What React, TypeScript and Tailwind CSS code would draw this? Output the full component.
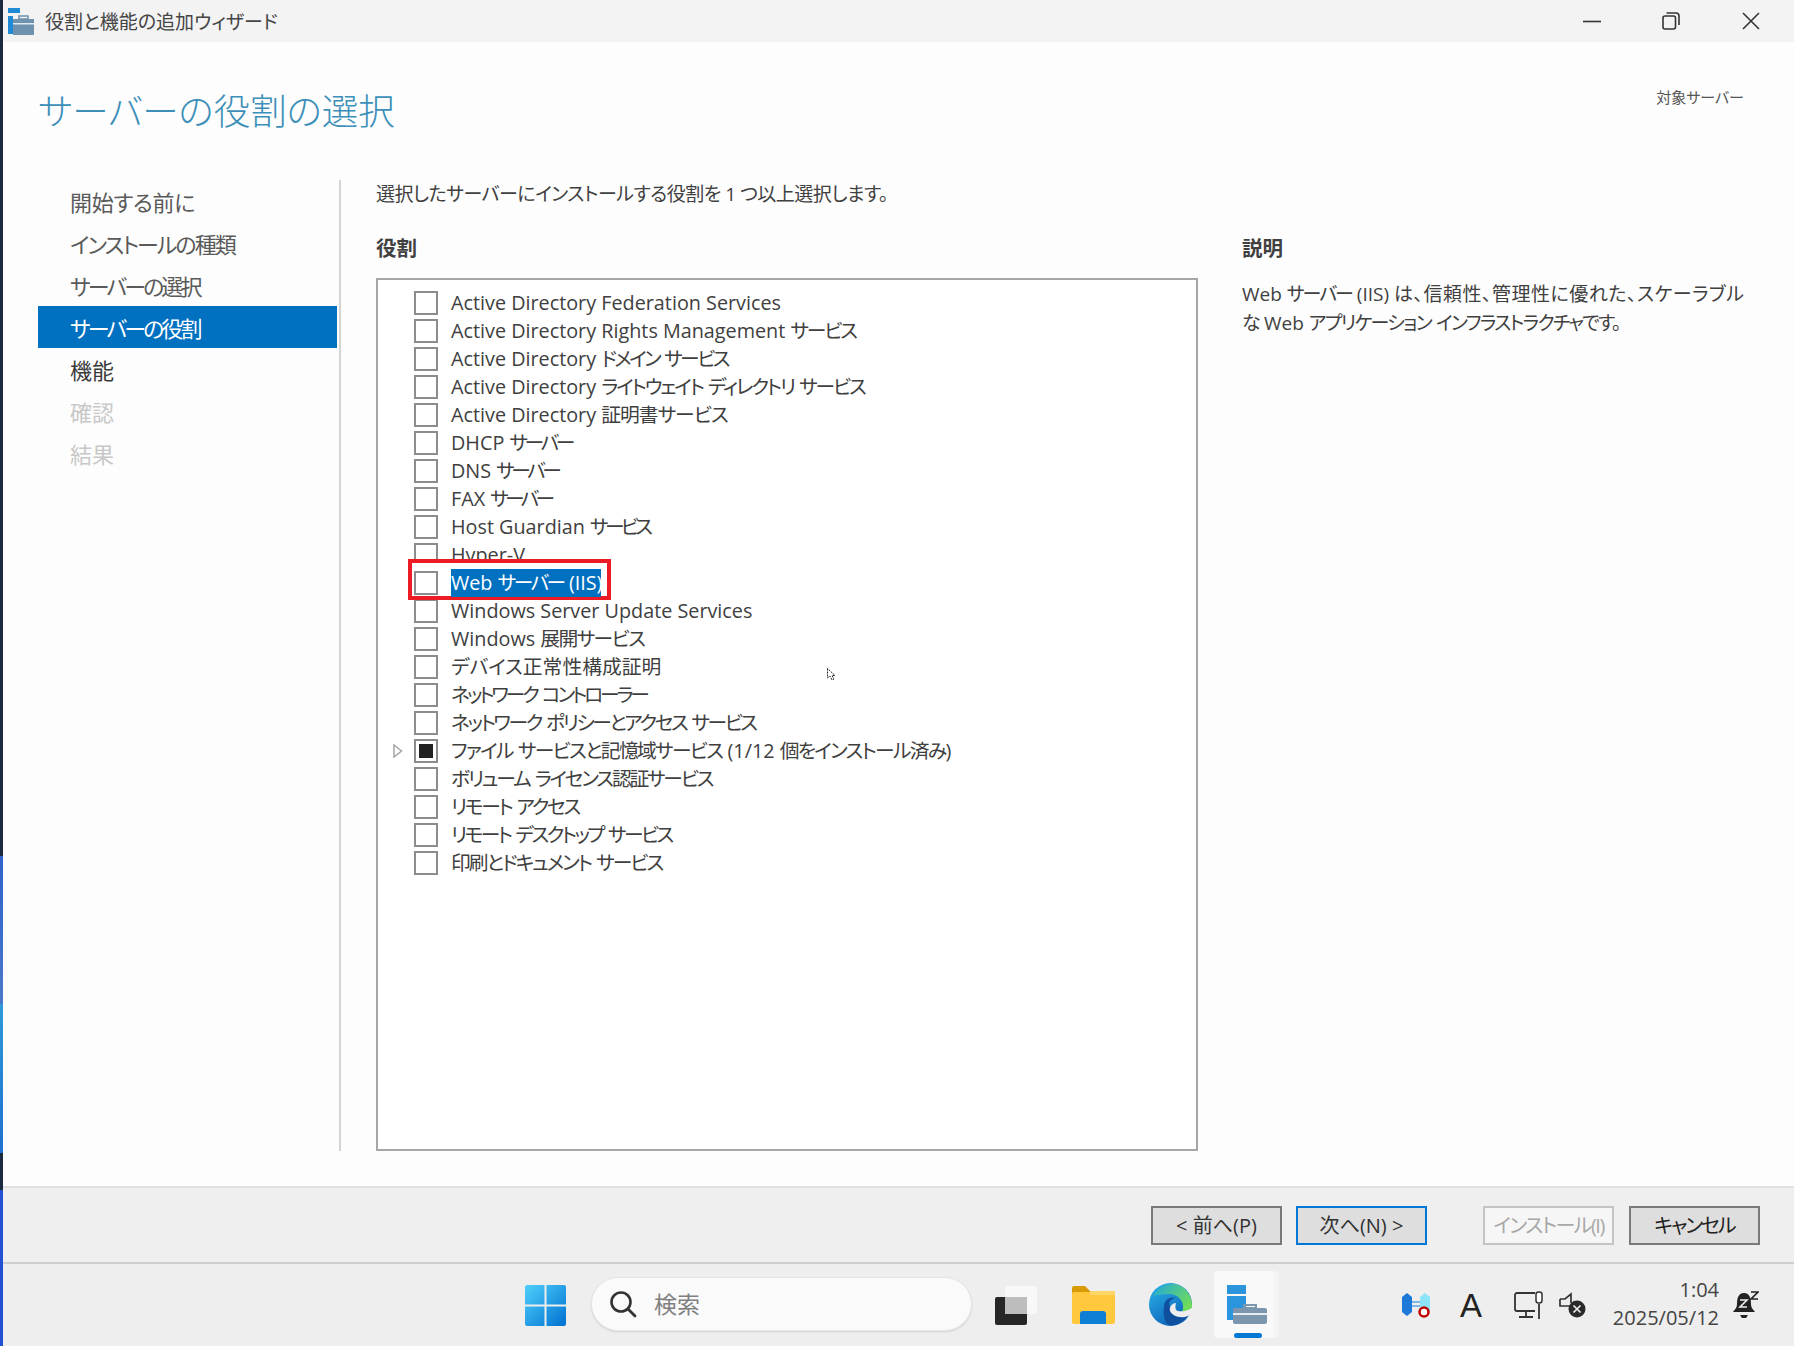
const navItems = [
  { label: "開始する前に", cls: "text-[#5a5a5a] tracking-[-0.3px]" },
  { label: "インストールの種類", cls: "text-[#5a5a5a] tracking-[-2px]" },
  { label: "サーバーの選択", cls: "text-[#5a5a5a] tracking-[-2.9px]" },
  { label: "サーバーの役割", cls: "text-white bg-[#0070c0] tracking-[-2.9px]" },
  { label: "機能", cls: "text-[#3a3a3a]" },
  { label: "確認", cls: "text-[#c8c8c8]" },
  { label: "結果", cls: "text-[#c8c8c8]" },
];

const roles = [
  { text: "Active Directory Federation Services", jp: "" },
  { text: "Active Directory Rights Management サービス", jp: "tracking-[-2.2px]" },
  { text: "Active Directory ドメイン サービス", jp: "tracking-[-2.55px]" },
  { text: "Active Directory ライトウェイト ディレクトリ サービス", jp: "tracking-[-2.15px]" },
  { text: "Active Directory 証明書サービス", jp: "tracking-[-1px]" },
  { text: "DHCP サーバー", jp: "tracking-[-3.4px]" },
  { text: "DNS サーバー", jp: "tracking-[-3.5px]" },
  { text: "FAX サーバー", jp: "tracking-[-3.8px]" },
  { text: "Host Guardian サービス", jp: "tracking-[-3.7px]" },
  { text: "Hyper-V", jp: "" },
  { text: "Web サーバー (IIS)", jp: "tracking-[-2.5px]" },
  { text: "Windows Server Update Services", jp: "" },
  { text: "Windows 展開サービス", jp: "tracking-[-1.6px]" },
  { text: "デバイス正常性構成証明", jp: "" },
  { text: "ネットワーク コントローラー", jp: "tracking-[-3.15px]" },
  { text: "ネットワーク ポリシーとアクセス サービス", jp: "tracking-[-2.45px]" },
  { text: "ファイル サービスと記憶域サービス (1/12 個をインストール済み)", jp: "tracking-[-1.7px]" },
  { text: "ボリューム ライセンス認証サービス", jp: "tracking-[-2.2px]" },
  { text: "リモート アクセス", jp: "tracking-[-2.35px]" },
  { text: "リモート デスクトップ サービス", jp: "tracking-[-2.6px]" },
  { text: "印刷とドキュメント サービス", jp: "tracking-[-2px]" },
];

function Squeezed({ text, cls }: { text: string; cls: string }) {
  return (
    <>
      {text.split(/([^\x00-\x7f]+)/).map((part, i) =>
        i % 2 === 1 ? <span key={i} className={cls}>{part}</span> : <span key={i}>{part}</span>
      )}
    </>
  );
}

function ServerIcon() {
  return (
    <svg width="26" height="27" viewBox="0 0 26 27" className="shrink-0">
      <rect x="0" y="0" width="12" height="5" fill="#1f8ad6" />
      <rect x="0" y="8" width="5" height="18" fill="#1f8ad6" />
      <rect x="5" y="11" width="21" height="16" fill="#6f92ae" />
      <rect x="5" y="15" width="21" height="1.5" fill="#dfe8ee" />
      <rect x="11" y="8" width="9" height="3" fill="none" stroke="#6f92ae" strokeWidth="1.5" />
    </svg>
  );
}

function TaskbarServerIcon() {
  return (
    <svg width="40" height="40" viewBox="0 0 40 40">
      <rect x="0" y="0" width="19" height="9" fill="#2a94dc" />
      <rect x="0" y="11" width="19" height="24" fill="#2a94dc" />
      <rect x="6" y="23" width="34" height="16" rx="2" fill="#7b96ad" />
      <rect x="6" y="28" width="34" height="2" fill="#e6edf2" />
      <rect x="17" y="20" width="12" height="3" fill="none" stroke="#7b96ad" strokeWidth="2" />
    </svg>
  );
}

function Button({ label, cls }: { label: string; cls: string }) {
  return (
    <div className={"w-[131px] h-[39px] pt-[2px] flex items-center justify-center border-2 text-[20px] " + cls}>{label}</div>
  );
}

export default function App() {
  return (
    <div className="relative flex w-[1794px] h-[1346px] overflow-hidden bg-white font-['Open_Sans','Noto_Sans_CJK_JP',sans-serif] [font-feature-settings:'palt'] text-[#404040]">
      <div className="w-[3px] flex flex-col shrink-0">
        <div className="h-[856px] bg-[#1c2a40]" />
        <div className="h-[148px] bg-gradient-to-b from-[#2f62cc] to-[#4a78c8]" />
        <div className="h-[149px] bg-gradient-to-b from-[#2f9ad8] to-[#1f70d0]" />
        <div className="h-[37px] bg-[#1c2a40]" />
        <div className="flex-1 bg-[#2450d4]" />
      </div>

      <div className="flex-1 flex flex-col min-w-0">
        {/* title bar */}
        <div className="h-[42px] bg-[#f3f3f3] flex items-center shrink-0">
          <div className="ml-[5px] mt-[1px]"><ServerIcon /></div>
          <span className="ml-[11px] mt-[2px] text-[19px] text-[#444]">役割と機能の追加ウィザード</span>
          <div className="ml-auto flex items-center">
            <svg width="18" height="18" viewBox="0 0 18 18" className="mr-[61px]">
              <path d="M0 9.5H18" stroke="#333" strokeWidth="1.6" />
            </svg>
            <svg width="18" height="18" viewBox="0 0 18 18" className="mr-[62px]">
              <rect x="1" y="4" width="12.5" height="13" rx="2" fill="none" stroke="#333" strokeWidth="1.6" />
              <path d="M4.5 1H14a3 3 0 0 1 3 3v9" fill="none" stroke="#333" strokeWidth="1.6" />
            </svg>
            <svg width="18" height="18" viewBox="0 0 18 18" className="mr-[34px]">
              <path d="M1 1L17 17M17 1L1 17" stroke="#333" strokeWidth="1.6" />
            </svg>
          </div>
        </div>

        {/* wizard body */}
        <div className="flex-1 flex flex-col bg-[#fdfdfd] min-h-0">
          <div className="h-[138px] flex shrink-0">
            <div className="ml-[35px] mt-[44px] text-[36.5px] leading-[50px] font-light text-[#3c8fb8]">サーバーの役割の選択</div>
            <div className="ml-auto mr-[50px] mt-[45px] text-[15px] leading-[20px] text-[#555]">対象サーバー</div>
          </div>

          <div className="flex-1 flex min-h-0 pb-[35px]">
            <div className="ml-[35px] w-[299px] shrink-0">
              {navItems.map((n) => (
                <div key={n.label} className={"h-[42px] pl-[32px] pt-[3px] flex items-center text-[22px] " + n.cls}>
                  {n.label}
                </div>
              ))}
            </div>
            <div className="ml-[2px] w-[2px] bg-[#d4d4d4] shrink-0" />

            <div className="ml-[35px] w-[822px] shrink-0 flex flex-col">
              <div className="h-[28px] flex items-center text-[19px] tracking-[-0.5px] whitespace-nowrap">
                選択したサーバーにインストールする役割を 1 つ以上選択します。
              </div>
              <div className="h-[70px] pt-[26px] text-[20.5px] leading-[28px] font-bold">役割</div>
              <div className="flex-1 border-2 border-[#a6a6a6] bg-white pt-[9px]">
                {roles.map((r, i) => {
                  const isWeb = i === 10;
                  const isFile = i === 16;
                  return (
                    <div key={r.text} className={"relative h-[28px] pl-[36px] flex items-center text-[19.8px] whitespace-nowrap " + (isWeb ? "z-10" : "")}>
                      {isWeb && (
                        <div className="absolute left-[30px] top-[-10px] w-[203px] h-[41px] border-4 border-[#ed1c24] bg-white" />
                      )}
                      {isFile && (
                        <svg width="10" height="14" viewBox="0 0 10 14" className="absolute left-[15px] top-[7px]">
                          <path d="M1 1L8.5 7L1 13Z" fill="none" stroke="#a6a6a6" strokeWidth="1.5" />
                        </svg>
                      )}
                      <div className="relative w-[24px] h-[24px] border-2 border-[#8c8c8c] bg-white shrink-0 flex items-center justify-center">
                        {isFile && <div className="w-[14px] h-[14px] bg-[#222]" />}
                      </div>
                      <span className={"relative ml-[13px] " + (isWeb ? "bg-[#0070c0] text-white h-[28px] leading-[28px] w-[150px]" : "")}>
                        <Squeezed text={r.text} cls={r.jp} />
                      </span>
                    </div>
                  );
                })}
              </div>
            </div>

            <div className="ml-[44px] flex-1 min-w-0">
              <div className="h-[42px]" />
              <div className="h-[57px] pt-[12px] text-[20.5px] leading-[28px] font-bold">説明</div>
              <div className="text-[19px] leading-[29px] whitespace-nowrap mt-[1px]">
                <Squeezed text="Web サーバー " cls="tracking-[-2px]" />
                (IIS) <span className="tracking-[0.5px]">は、信頼性、管理性に優れた、スケーラブル</span>
                <br />
                <Squeezed text="な Web アプリケーション インフラストラクチャです。" cls="tracking-[-1.65px]" />
              </div>
            </div>
          </div>
        </div>

        {/* footer buttons */}
        <div className="h-[76px] shrink-0 bg-[#efefef] border-t-2 border-[#e0e0e0] flex items-center">
          <div className="ml-[1148px]">
            <Button label="< 前へ(P)" cls="bg-[#dedede] border-[#7a7a7a] text-[#333]" />
          </div>
          <div className="ml-[14px]">
            <Button label="次へ(N) >" cls="bg-[#dedede] border-[#0078d7] text-[#333]" />
          </div>
          <div className="ml-[56px]">
            <Button label="インストール(I)" cls="bg-[#f6f6f6] border-[#c4c4c4] text-[#a8a8a8] tracking-[-1.5px]" />
          </div>
          <div className="ml-[15px]">
            <Button label="キャンセル" cls="bg-[#dedede] border-[#7a7a7a] text-[#222] tracking-[-2px]" />
          </div>
        </div>

        {/* taskbar */}
        <div className="h-[84px] shrink-0 bg-[#eeeeee] border-t-2 border-[#cfcfcf] flex items-center">
          <svg width="41" height="41" viewBox="0 0 41 41" className="ml-[522px] shrink-0">
            <defs>
              <linearGradient id="w" x1="0" y1="0" x2="1" y2="1">
                <stop offset="0" stopColor="#4fd0fb" />
                <stop offset="1" stopColor="#0070d0" />
              </linearGradient>
            </defs>
            <path d="M0 2a2 2 0 0 1 2-2H19.5V19.5H0ZM21.5 0H39a2 2 0 0 1 2 2V19.5H21.5ZM0 21.5H19.5V41H2a2 2 0 0 1-2-2ZM21.5 21.5H41V39a2 2 0 0 1-2 2H21.5Z" fill="url(#w)" />
          </svg>

          <div className="ml-[25px] -mt-[2px] w-[381px] h-[54px] rounded-full bg-[#fafafa] border border-[#e6e6e6] shadow-[0_1px_2px_rgba(0,0,0,0.12)] flex items-center shrink-0">
            <svg width="28" height="28" viewBox="0 0 28 28" className="ml-[17px]">
              <circle cx="12" cy="12" r="9.5" fill="none" stroke="#333" strokeWidth="2.6" />
              <path d="M19 19L26 26" stroke="#333" strokeWidth="2.8" strokeLinecap="round" />
            </svg>
            <span className="ml-[17px] text-[23px] text-[#808080]">検索</span>
          </div>

          <svg width="42" height="39" viewBox="0 0 42 39" className="ml-[23px] shrink-0">
            <rect x="0" y="11" width="32" height="28" rx="2" fill="#262626" />
            <rect x="10" y="0" width="32" height="28" rx="2" fill="#f8f8f8" fillOpacity="0.92" />
            <rect x="10" y="11" width="22" height="17" fill="#bdbdbd" />
          </svg>

          <svg width="43" height="38" viewBox="0 0 43 38" className="ml-[35px] shrink-0">
            <path d="M0 2a2 2 0 0 1 2-2H13L18 5H41a2 2 0 0 1 2 2V10H0Z" fill="#d99a08" />
            <rect x="0" y="6" width="43" height="32" rx="2" fill="#ffc83d" />
            <rect x="18" y="5" width="25" height="4" fill="#ffd768" />
            <path d="M8 38V28a3 3 0 0 1 3-3H31a3 3 0 0 1 3 3V38Z" fill="#0f7fd6" />
          </svg>

          <svg width="43" height="43" viewBox="0 0 43 43" className="ml-[34px] -mt-[2px] shrink-0">
            <defs>
              <linearGradient id="e1" x1="0" y1="0" x2="0.6" y2="1">
                <stop offset="0" stopColor="#2cb5e8" />
                <stop offset="1" stopColor="#0c62b8" />
              </linearGradient>
              <linearGradient id="e2" x1="0" y1="0" x2="1" y2="0.6">
                <stop offset="0" stopColor="#1fa8dc" />
                <stop offset="1" stopColor="#6fdc5a" />
              </linearGradient>
            </defs>
            <circle cx="21.5" cy="21.5" r="21.5" fill="url(#e1)" />
            <path d="M4 13C10 3 20 0 26 1C36 3 43 12 43 23C43 28 38 30 33 29C37 20 30 11 20 11C13 11 8 12 4 13Z" fill="url(#e2)" />
            <path d="M15 24C15 17 21 13 27 15C21 16 19 20 21 24C24 32 32 33 39 32C33 41 24 44 18 41C15 36 14 30 15 24Z" fill="#0f4f9e" />
            <path d="M44 24C39 28 33 29 29 28C26 27 26 24 27 20C23 20 20 24 21 28C23 33 32 36 39 33L44 30Z" fill="#eeeeee" />
          </svg>

          <div className="relative ml-[22px] -mt-[2px] w-[60px] h-[67px] rounded-[4px] bg-[#f9f9f9] shadow-[5px_0_0_#f4f4f4] shrink-0 flex justify-start pl-[13px] pt-[14px]">
            <TaskbarServerIcon />
            <div className="absolute left-[20px] bottom-0 w-[28px] h-[5px] rounded-full bg-[#0078d4]" />
          </div>

          <svg width="30" height="26" viewBox="0 0 30 26" className="ml-[127px] shrink-0">
            <path d="M1 5L6 1L11 5V20L6 24L1 20Z" fill="#1e78d8" />
            <path d="M19 5L24 1L29 5V18L24 22L19 18Z" fill="#8ce4f8" />
            <path d="M11 10H19M11 14H19" stroke="#5aa8e0" strokeWidth="1.5" />
            <circle cx="23" cy="20" r="4.5" fill="#fff" stroke="#c00000" strokeWidth="2.5" />
          </svg>

          <span className="ml-[29px] text-[33px] leading-none font-light text-[#222] font-['Liberation_Sans',sans-serif]">A</span>

          <svg width="30" height="29" viewBox="0 0 30 29" className="ml-[32px] shrink-0">
            <path d="M21 2H3a2 2 0 0 0-2 2V18a2 2 0 0 0 2 2H21M12 20V25M5 26H19M25 13V28" fill="none" stroke="#333" strokeWidth="1.8" />
            <rect x="22" y="1" width="6" height="11" rx="2.5" fill="#fff" stroke="#333" strokeWidth="1.5" />
          </svg>

          <svg width="27" height="26" viewBox="0 0 27 26" className="ml-[15px] shrink-0">
            <path d="M1 7H6L12 2V11M12 14H6H1V7" fill="none" stroke="#333" strokeWidth="1.7" />
            <circle cx="18" cy="17" r="8.5" fill="#2a2a2a" />
            <path d="M14.5 13.5L21.5 20.5M21.5 13.5L14.5 20.5" stroke="#eee" strokeWidth="1.7" />
          </svg>

          <div className="ml-[21px] -mt-[2px] w-[112px] text-right text-[#444] text-[20px] leading-[28px] whitespace-nowrap shrink-0">
            <div>1:04</div>
            <div>2025/05/12</div>
          </div>

          <svg width="26" height="28" viewBox="0 0 26 28" className="ml-[14px] shrink-0">
            <path d="M11 2C5 2 4 8 4 13C4 17 2 18 0 21H22C20 18 18 17 18 13C18 8 17 2 11 2Z" fill="#222" />
            <path d="M7 24H15L13 27H9Z" fill="#222" />
            <path d="M7 9H14L7 16H14" fill="none" stroke="#eee" strokeWidth="1.6" />
            <path d="M18 1H25L18 8H25" fill="none" stroke="#222" strokeWidth="1.6" />
          </svg>
        </div>
      </div>

      {/* mouse pointer */}
      <svg width="9" height="13" viewBox="0 0 9 13" className="absolute left-[827px] top-[668px]">
        <path d="M0.5 0.5V10L3 8L5 12L7 11L5 7.5L8 7.5Z" fill="#fff" stroke="#222" strokeWidth="1" strokeDasharray="2 1" />
      </svg>
    </div>
  );
}
